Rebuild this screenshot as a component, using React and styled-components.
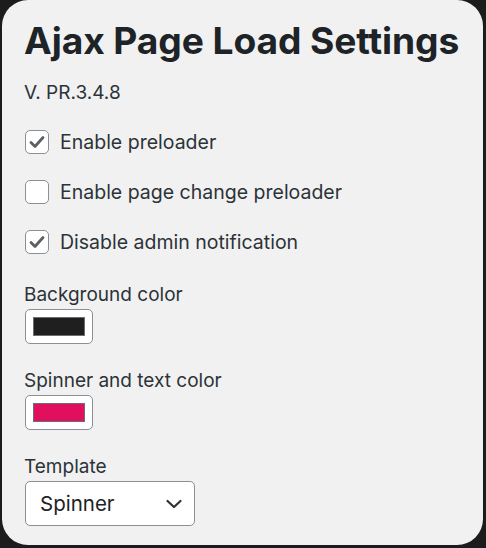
import React from "react";
import styled, { createGlobalStyle } from "styled-components";

const Global = createGlobalStyle`
  html, body { margin: 0; padding: 0; background: #1c1c1c; }
  body { font-family: Inter, "Noto Sans", sans-serif; }
  * { box-sizing: border-box; }
`;

const Card = styled.div`
  margin: 0 3px 0 2px;
  height: 545px;
  background: #f1f1f1;
  border-radius: 26px;
  padding: 18px 22px 0 22px;
  color: #1d2327;
  display: flex;
  flex-direction: column;
`;

const Title = styled.h1`
  margin: 0;
  font-size: 37.2px;
  line-height: 46px;
  font-weight: 700;
  letter-spacing: -0.1px;
  white-space: nowrap;
  color: #1d2327;
`;

const Version = styled.div`
  margin-top: 17px;
  font-size: 19px;
  line-height: 24px;
  color: #2c3338;
`;

const Options = styled.div`
  margin-top: 25px;
  display: flex;
  flex-direction: column;
  gap: 26px;
`;

const Row = styled.label`
  display: flex;
  align-items: center;
  gap: 11px;
  font-size: 19.5px;
  line-height: 24px;
  color: #2c3338;
`;

const Box = styled.span`
  width: 24px;
  height: 24px;
  border: 1.5px solid #8c8f94;
  border-radius: 5px;
  background: #fff;
  display: flex;
  align-items: center;
  justify-content: center;
  margin-left: 1px;
`;

const Field = styled.div`
  display: flex;
  flex-direction: column;
  gap: 2px;
  margin-top: ${(p) => p.$top}px;
`;

const Label = styled.div`
  font-size: 19px;
  line-height: 24px;
  color: #2c3338;
`;

const Swatch = styled.div`
  width: 68px;
  height: 35px;
  margin-left: 1px;
  border: 1.5px solid #8c8f94;
  border-radius: 5px;
  background: #fff;
  padding: 7px 7px;
`;

const SwatchFill = styled.div`
  width: 100%;
  height: 100%;
  background: ${(p) => p.$color};
  border: 1.5px solid #6b6e72;
`;

const Select = styled.div`
  width: 170px;
  height: 45px;
  margin-left: 1px;
  border: 1.5px solid #8c8f94;
  border-radius: 5px;
  background: #fff;
  display: flex;
  align-items: center;
  justify-content: space-between;
  padding: 0 11px 0 14px;
  font-size: 20.5px;
  color: #1d2327;
`;

const Check = () => (
  <svg width="16" height="14" viewBox="0 0 16 14">
    <path d="M2 7.5 L6 11.5 L14 2.5" fill="none" stroke="#5c6166" strokeWidth="2.8" strokeLinecap="round" strokeLinejoin="round" />
  </svg>
);

const Chevron = () => (
  <svg width="18" height="12" viewBox="0 0 18 12">
    <path d="M2.5 3 L9 9 L15.5 3" fill="none" stroke="#2c3338" strokeWidth="2.2" strokeLinecap="round" strokeLinejoin="round" />
  </svg>
);

const Option = ({ checked, children }) => (
  <Row>
    <Box>{checked && <Check />}</Box>
    {children}
  </Row>
);

export default function App() {
  return (
    <>
      <Global />
      <Card>
        <Title>Ajax Page Load Settings</Title>
        <Version>V. PR.3.4.8</Version>
        <Options>
          <Option checked>Enable preloader</Option>
          <Option>Enable page change preloader</Option>
          <Option checked>Disable admin notification</Option>
        </Options>
        <Field $top={29}>
          <Label>Background color</Label>
          <Swatch><SwatchFill $color="#1f1f1f" /></Swatch>
        </Field>
        <Field $top={25}>
          <Label>Spinner and text color</Label>
          <Swatch><SwatchFill $color="#e0105f" /></Swatch>
        </Field>
        <Field $top={25}>
          <Label>Template</Label>
          <Select>
            Spinner
            <Chevron />
          </Select>
        </Field>
      </Card>
    </>
  );
}
